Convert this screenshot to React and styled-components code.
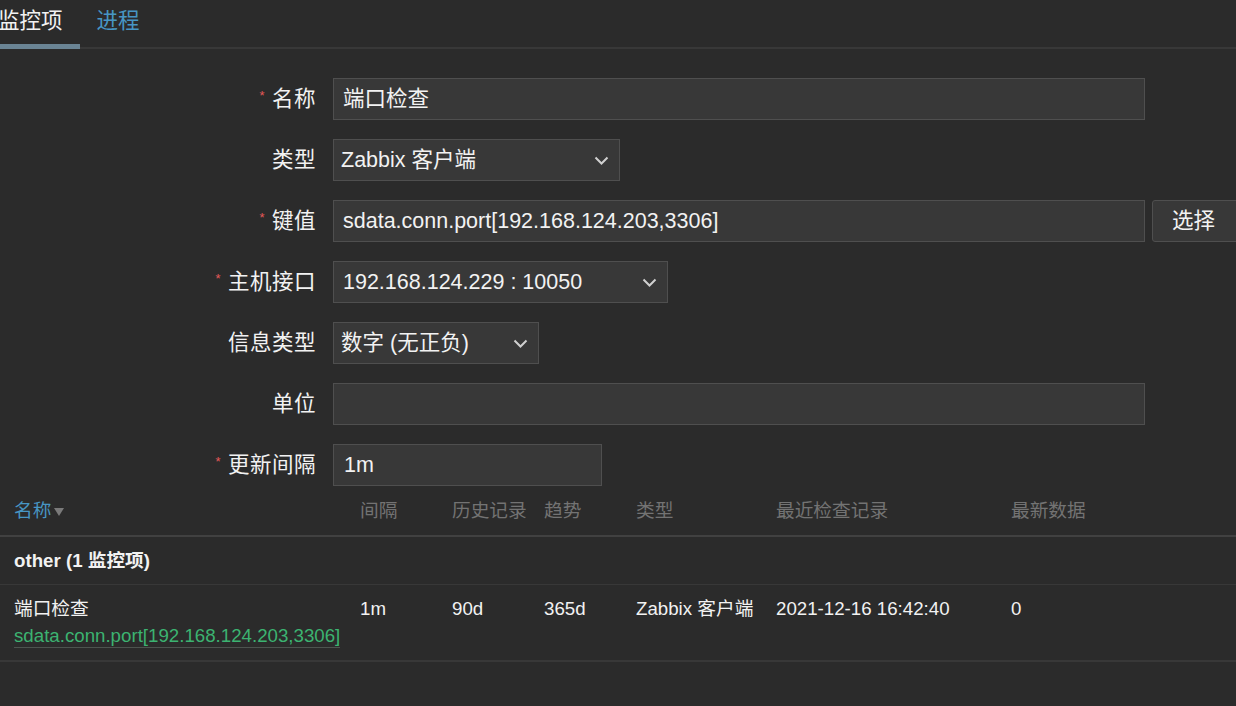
import React from "react";
import styled, { createGlobalStyle } from "styled-components";

const Global = createGlobalStyle`
  html, body { margin: 0; padding: 0; background: #2b2b2b; }
  body {
    font-family: "Liberation Sans", Arial, "Noto Sans CJK SC", sans-serif;
    color: #f2f2f2;
    overflow: hidden;
  }
`;

const Page = styled.div`
  width: 1236px;
  height: 706px;
  background: #2b2b2b;
  overflow: hidden;
`;

const TabBar = styled.div`
  display: flex;
  border-bottom: 2px solid #383838;
  height: 47px;
`;

const TabList = styled.div`
  display: flex;
  margin-left: -19px;
`;

const Tab = styled.div`
  padding: 7px 17px 0;
  font-size: 21.5px;
  line-height: 28px;
  color: ${p => (p.$active ? "#f2f2f2" : "#4796c4")};
  position: relative;
  height: 47px;
  box-sizing: border-box;
  &::after {
    content: "";
    display: ${p => (p.$active ? "block" : "none")};
    position: absolute;
    left: 0;
    right: 0;
    bottom: -2px;
    height: 5px;
    background: #6a8494;
  }
`;

const Form = styled.div`
  display: grid;
  grid-template-columns: 316px 1fr;
  column-gap: 17px;
  row-gap: 19px;
  padding-top: 29px;
  padding-bottom: 3px;
  align-items: center;
`;

const Label = styled.div`
  display: flex;
  justify-content: flex-end;
  align-items: center;
  font-size: 21.5px;
  line-height: 42px;
  color: #f2f2f2;
  letter-spacing: 0.5px;
`;

const Star = styled.span`
  color: #e45959;
  font-size: 13px;
  line-height: 1;
  margin-right: 7px;
  align-self: flex-start;
  margin-top: 11px;
`;

const FieldRow = styled.div`
  display: flex;
  gap: 7px;
  align-items: center;
`;

const Input = styled.div`
  box-sizing: border-box;
  width: ${p => p.$w}px;
  height: 42px;
  background: #383838;
  border: 1px solid #4f4f4f;
  padding: 0 ${p => p.$pad ?? 9}px;
  font-size: 21.5px;
  line-height: 40px;
  color: #f2f2f2;
  white-space: nowrap;
  overflow: hidden;
`;

const Select = styled(Input)`
  display: flex;
  align-items: center;
  justify-content: space-between;
  padding: 0 10px 0 ${p => p.$pad ?? 7}px;
`;

const Button = styled.div`
  box-sizing: border-box;
  width: 88px;
  height: 42px;
  background: #383838;
  border: 1px solid #4f4f4f;
  border-radius: 3px;
  padding-left: 19px;
  font-size: 21.5px;
  line-height: 40px;
  color: #f2f2f2;
  flex-shrink: 0;
`;

const Chevron = () => (
  <svg width="15" height="9" viewBox="0 0 15 9">
    <path d="M1.5 1.5 L7.5 7.5 L13.5 1.5" fill="none" stroke="#d0d0d0" strokeWidth="2" />
  </svg>
);

const Table = styled.div`
  font-size: 18.7px;
`;

const Grid = styled.div`
  display: grid;
  grid-template-columns: 346px 92px 92px 92px 140px 235px 1fr;
  padding-left: 14px;
`;

const HeadRow = styled(Grid)`
  height: 48px;
  box-sizing: border-box;
  padding-top: 9px;
  line-height: 26px;
  align-items: start;
  border-bottom: 2px solid #414141;
  color: #737373;
`;

const SortHead = styled.div`
  color: #4796c4;
  display: flex;
  align-items: center;
  gap: 3px;
`;

const Arrow = styled.span`
  width: 0;
  height: 0;
  border-left: 5px solid transparent;
  border-right: 5px solid transparent;
  border-top: 8px solid #7a7a7a;
  margin-top: 2px;
`;

const GroupRow = styled.div`
  height: 48px;
  box-sizing: border-box;
  display: flex;
  align-items: center;
  padding: 0 0 4px 14px;
  font-weight: bold;
  border-bottom: 1px solid #383838;
`;

const DataRow = styled(Grid)`
  height: 77px;
  border-bottom: 2px solid #383838;
  align-items: start;
  padding-top: 10px;
  box-sizing: border-box;
  line-height: 28px;
`;

const NameCell = styled.div`
  display: flex;
  flex-direction: column;
  align-items: flex-start;
`;

const KeyLink = styled.span`
  color: #3cb371;
  line-height: 22px;
  margin-top: 2px;
  border-bottom: 1px solid #4d544f;
`;

export default function App() {
  return (
    <Page>
      <Global />
      <TabBar>
        <TabList>
          <Tab $active>监控项</Tab>
          <Tab>进程</Tab>
        </TabList>
      </TabBar>
      <Form>
        <Label><Star>*</Star>名称</Label>
        <Input $w={812}>端口检查</Input>

        <Label>类型</Label>
        <Select $w={287}>Zabbix 客户端<Chevron /></Select>

        <Label><Star>*</Star>键值</Label>
        <FieldRow>
          <Input $w={812}>sdata.conn.port[192.168.124.203,3306]</Input>
          <Button>选择</Button>
        </FieldRow>

        <Label><Star>*</Star>主机接口</Label>
        <Select $w={335} $pad={9}>192.168.124.229 : 10050<Chevron /></Select>

        <Label>信息类型</Label>
        <Select $w={206}>数字 (无正负)<Chevron /></Select>

        <Label>单位</Label>
        <Input $w={812} />

        <Label><Star>*</Star>更新间隔</Label>
        <Input $w={269} $pad={10}>1m</Input>
      </Form>
      <Table>
        <HeadRow>
          <SortHead>名称<Arrow /></SortHead>
          <div>间隔</div>
          <div>历史记录</div>
          <div>趋势</div>
          <div>类型</div>
          <div>最近检查记录</div>
          <div>最新数据</div>
        </HeadRow>
        <GroupRow>other (1 监控项)</GroupRow>
        <DataRow>
          <NameCell>
            <span>端口检查</span>
            <KeyLink>sdata.conn.port[192.168.124.203,3306]</KeyLink>
          </NameCell>
          <div>1m</div>
          <div>90d</div>
          <div>365d</div>
          <div>Zabbix 客户端</div>
          <div>2021-12-16 16:42:40</div>
          <div>0</div>
        </DataRow>
      </Table>
    </Page>
  );
}
